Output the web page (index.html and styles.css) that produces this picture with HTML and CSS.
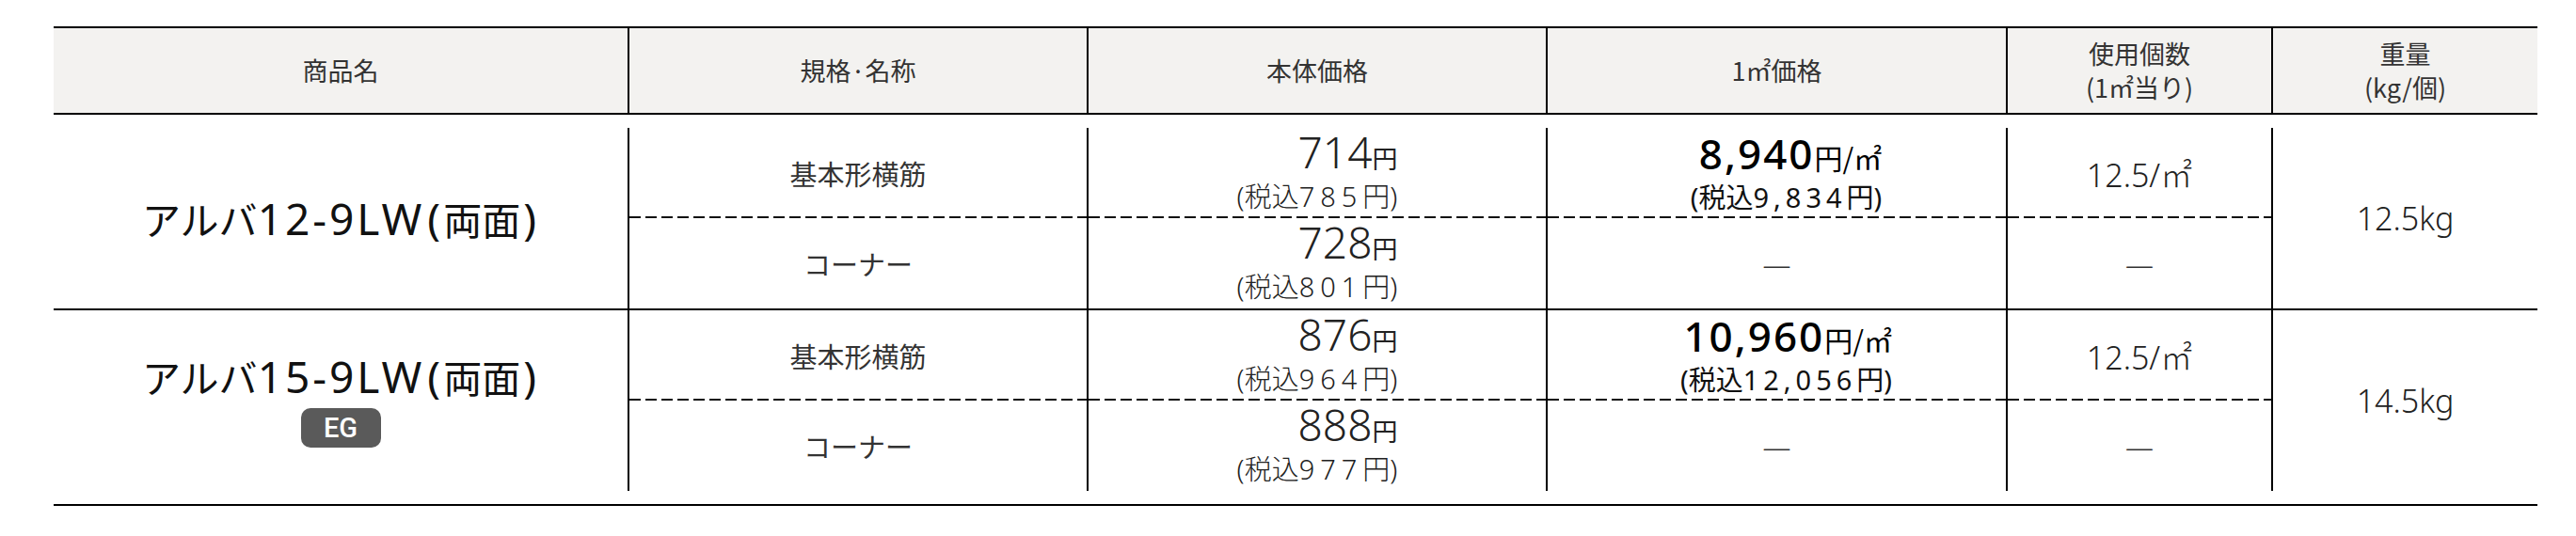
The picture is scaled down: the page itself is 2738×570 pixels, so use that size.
FILE: index.html
```html
<!DOCTYPE html>
<html lang="ja">
<head>
<meta charset="utf-8">
<title>アルバ 価格表</title>
<link rel="stylesheet" href="styles.css">
</head>
<body>
<div class="page">
  <div class="spec-table">
    <div class="thead">
      <div class="th">商品名</div>
      <div class="th">規格·名称</div>
      <div class="th">本体価格</div>
      <div class="th">1㎡価格</div>
      <div class="th">使用個数<br>(1㎡当り)</div>
      <div class="th">重量<br>(kg/個)</div>
    </div>
    <div class="tbody">
      <div class="group">
        <div class="name">
          <div class="name-text">アルバ<span class="lat">12-9LW</span><span class="paren">(</span>両面<span class="paren">)</span></div>
        </div>
        <div class="cell spec top">基本形横筋</div>
        <div class="cell price top">
          <div class="pr">
            <div class="big">714<span class="yen">円</span></div>
            <div class="tax">(税込<span class="num">785</span>円)</div>
          </div>
        </div>
        <div class="cell m2 top">
          <div class="pr2">
            <div class="big2">8,940<span class="unit">円/㎡</span></div>
            <div class="tax2">(税込<span class="num">9,834</span>円)</div>
          </div>
        </div>
        <div class="cell use top">12.5/㎡</div>
        <div class="cell weight">12.5kg</div>
        <div class="cell spec">コーナー</div>
        <div class="cell price">
          <div class="pr">
            <div class="big">728<span class="yen">円</span></div>
            <div class="tax">(税込<span class="num">801</span>円)</div>
          </div>
        </div>
        <div class="cell m2"><span class="dash">—</span></div>
        <div class="cell use"><span class="dash">—</span></div>
      </div>
      <div class="group">
        <div class="name">
          <div class="name-text">アルバ<span class="lat">15-9LW</span><span class="paren">(</span>両面<span class="paren">)</span></div>
          <span class="badge">EG</span>
        </div>
        <div class="cell spec top">基本形横筋</div>
        <div class="cell price top">
          <div class="pr">
            <div class="big">876<span class="yen">円</span></div>
            <div class="tax">(税込<span class="num">964</span>円)</div>
          </div>
        </div>
        <div class="cell m2 top">
          <div class="pr2">
            <div class="big2">10,960<span class="unit">円/㎡</span></div>
            <div class="tax2">(税込<span class="num">12,056</span>円)</div>
          </div>
        </div>
        <div class="cell use top">12.5/㎡</div>
        <div class="cell weight">14.5kg</div>
        <div class="cell spec">コーナー</div>
        <div class="cell price">
          <div class="pr">
            <div class="big">888<span class="yen">円</span></div>
            <div class="tax">(税込<span class="num">977</span>円)</div>
          </div>
        </div>
        <div class="cell m2"><span class="dash">—</span></div>
        <div class="cell use"><span class="dash">—</span></div>
      </div>
    </div>
  </div>
</div>
</body>
</html>
```
FILE: styles.css
```css
* {
  box-sizing: border-box;
  margin: 0;
  padding: 0;
}

body {
  background: #ffffff;
  font-family: "Noto Sans", "Noto Sans CJK JP", sans-serif;
  color: #222222;
}

.page {
  padding: 28px 0 0 57px;
}

.spec-table {
  width: 2640px;
}

.thead {
  display: grid;
  grid-template-columns: 610px 488px 488px 489px 282px 283px;
  height: 94px;
  border-top: 2px solid #000;
  border-bottom: 2px solid #000;
  background: #f3f2f0;
}

.th {
  display: flex;
  align-items: center;
  justify-content: center;
  text-align: center;
  font-family: "Noto Sans CJK JP", sans-serif;
  font-size: 27px;
  line-height: 36px;
  color: #333333;
  border-left: 2px solid #000;
}

.th:first-child {
  border-left: none;
}

.tbody {
  padding: 14px 0;
  border-bottom: 2px solid #000;
}

.group {
  display: grid;
  grid-template-columns: 610px 488px 488px 489px 282px 283px;
  grid-template-rows: 96px 96px;
}

.group + .group {
  border-top: 2px solid #000;
}

.name {
  grid-column: 1;
  grid-row: 1 / 3;
  display: flex;
  flex-direction: column;
  align-items: center;
  justify-content: center;
  gap: 10px;
}

.name-text {
  font-family: "Noto Sans CJK JP", sans-serif;
  font-size: 41px;
  line-height: 48px;
  color: #111111;
}

.name-text .lat {
  font-family: "Noto Sans", sans-serif;
  font-size: 46px;
  letter-spacing: 3px;
}

.name-text .paren {
  font-family: "Noto Sans", sans-serif;
  font-size: 46px;
  padding: 0 3px;
}

.badge {
  display: inline-flex;
  align-items: center;
  justify-content: center;
  width: 85px;
  height: 42px;
  border-radius: 10px;
  background: #5a5a5a;
  color: #ffffff;
  font-family: "Roboto", sans-serif;
  font-weight: 500;
  font-size: 29px;
  line-height: 1;
}

.cell {
  display: flex;
  align-items: center;
  justify-content: center;
  border-left: 2px solid #000;
}

.top {
  background-image: repeating-linear-gradient(to right, #111 0 12px, transparent 12px 17px);
  background-size: 100% 2px;
  background-position: left bottom;
  background-repeat: no-repeat;
}

.weight {
  grid-column: 6;
  grid-row: 1 / 3;
  font-size: 34px;
  font-weight: 300;
  color: #222222;
}

.spec {
  font-family: "Noto Sans CJK JP", sans-serif;
  font-size: 29px;
  color: #333333;
}

.use {
  font-size: 34px;
  font-weight: 300;
  color: #222222;
}

.dash {
  font-size: 30px;
  font-weight: 300;
  color: #333333;
}

.pr {
  text-align: right;
}

.big {
  font-size: 46px;
  font-weight: 300;
  line-height: 40px;
  color: #222222;
}

.yen {
  font-family: "Noto Sans CJK JP", sans-serif;
  font-size: 27px;
  font-weight: 400;
  line-height: 1;
}

.tax,
.tax2 {
  margin-top: 7px;
  font-size: 29px;
  line-height: 36px;
}

.tax {
  margin-top: 10px;
  font-weight: 300;
  color: #222222;
}

.tax .num {
  letter-spacing: 6px;
}

.tax2 .num {
  letter-spacing: 5px;
}

.pr2 {
  text-align: right;
  padding-left: 20px;
}

.big2 {
  font-size: 44px;
  font-weight: 500;
  line-height: 44px;
  letter-spacing: 2px;
  color: #000000;
}

.unit {
  font-family: "Noto Sans CJK JP", sans-serif;
  font-size: 30px;
  font-weight: 400;
  line-height: 1;
  letter-spacing: 0;
}

.tax2 {
  font-weight: 400;
  color: #111111;
}
```
